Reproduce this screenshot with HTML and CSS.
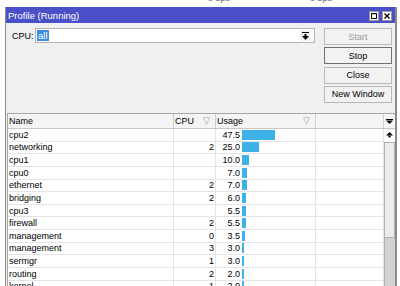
FILE: index.html
```html
<!DOCTYPE html>
<html>
<head>
<meta charset="utf-8">
<link rel="stylesheet" href="styles.css">
</head>
<body>
<div class="desk"><span class="desk-a">0 bps</span><span class="desk-b">0 bps</span></div>
<div class="window">
  <div class="titlebar">
    <span class="title">Profile (Running)</span>
    <span class="tb-btns">
      <svg class="tb-btn" width="10" height="10" viewBox="0 0 10 10"><rect x="0.5" y="0.5" width="9" height="9" fill="#fff" stroke="#9a9a9a"/><rect x="2.5" y="2.5" width="5" height="5" fill="none" stroke="#000"/><rect x="2" y="2" width="6" height="1.2" fill="#000"/></svg>
      <svg class="tb-btn" width="10" height="10" viewBox="0 0 10 10"><rect x="0.5" y="0.5" width="9" height="9" fill="#fff" stroke="#9a9a9a"/><path d="M2.5 2.5 L7.5 7.5 M7.5 2.5 L2.5 7.5" stroke="#000" stroke-width="1.3"/></svg>
    </span>
  </div>
  <div class="top">
    <div class="cpu-row">
      <span class="label">CPU:</span>
      <div class="combo">
        <span class="sel">all</span>
        <span class="drop"><svg width="7" height="8" viewBox="0 0 7 8"><rect x="0" y="0" width="7" height="1" fill="#000"/><rect x="2.5" y="2" width="2" height="2.5" fill="#000"/><polygon points="0,4 7,4 3.5,8" fill="#000"/></svg></span>
      </div>
    </div>
    <div class="buttons">
      <div class="btn disabled">Start</div>
      <div class="btn default">Stop</div>
      <div class="btn">Close</div>
      <div class="btn">New Window</div>
    </div>
  </div>
  <div class="table">
    <div class="grid">
      <div class="row head">
        <div class="cell">Name</div>
        <div class="cell hf">CPU <svg class="filt" width="7" height="8" viewBox="0 0 7 8"><polygon points="0.5,0.5 6.5,0.5 3.5,7.5" fill="none" stroke="#c4c4c4"/></svg></div>
        <div class="cell hf">Usage <svg class="filt" width="7" height="8" viewBox="0 0 7 8"><polygon points="0.5,0.5 6.5,0.5 3.5,7.5" fill="none" stroke="#c4c4c4"/></svg></div>
        <div class="cell"></div>
      </div>
      <div class="row"><div class="cell">cpu2</div><div class="cell num"></div><div class="cell use"><span class="val">47.5</span><span class="bar" style="width:33px"></span></div><div class="cell"></div></div>
      <div class="row"><div class="cell">networking</div><div class="cell num">2</div><div class="cell use"><span class="val">25.0</span><span class="bar" style="width:17px"></span></div><div class="cell"></div></div>
      <div class="row"><div class="cell">cpu1</div><div class="cell num"></div><div class="cell use"><span class="val">10.0</span><span class="bar" style="width:7px"></span></div><div class="cell"></div></div>
      <div class="row"><div class="cell">cpu0</div><div class="cell num"></div><div class="cell use"><span class="val">7.0</span><span class="bar" style="width:5px"></span></div><div class="cell"></div></div>
      <div class="row"><div class="cell">ethernet</div><div class="cell num">2</div><div class="cell use"><span class="val">7.0</span><span class="bar" style="width:5px"></span></div><div class="cell"></div></div>
      <div class="row"><div class="cell">bridging</div><div class="cell num">2</div><div class="cell use"><span class="val">6.0</span><span class="bar" style="width:4px"></span></div><div class="cell"></div></div>
      <div class="row"><div class="cell">cpu3</div><div class="cell num"></div><div class="cell use"><span class="val">5.5</span><span class="bar" style="width:4px"></span></div><div class="cell"></div></div>
      <div class="row"><div class="cell">firewall</div><div class="cell num">2</div><div class="cell use"><span class="val">5.5</span><span class="bar" style="width:4px"></span></div><div class="cell"></div></div>
      <div class="row"><div class="cell">management</div><div class="cell num">0</div><div class="cell use"><span class="val">3.5</span><span class="bar" style="width:2.5px"></span></div><div class="cell"></div></div>
      <div class="row"><div class="cell">management</div><div class="cell num">3</div><div class="cell use"><span class="val">3.0</span><span class="bar" style="width:2px"></span></div><div class="cell"></div></div>
      <div class="row"><div class="cell">sermgr</div><div class="cell num">1</div><div class="cell use"><span class="val">3.0</span><span class="bar" style="width:2px"></span></div><div class="cell"></div></div>
      <div class="row"><div class="cell">routing</div><div class="cell num">2</div><div class="cell use"><span class="val">2.0</span><span class="bar" style="width:1.5px"></span></div><div class="cell"></div></div>
      <div class="row"><div class="cell">kernel</div><div class="cell num">1</div><div class="cell use"><span class="val">2.0</span><span class="bar" style="width:1.5px"></span></div><div class="cell"></div></div>
    </div>
    <div class="vscroll">
      <div class="vs-head"><svg width="7" height="5" viewBox="0 0 7 5"><rect x="0" y="0" width="7" height="1" fill="#000"/><polygon points="0,1.5 7,1.5 3.5,5" fill="#000"/></svg></div>
      <div class="vs-up"><svg width="7" height="6" viewBox="0 0 7 6"><polygon points="3.5,0 7,3.5 0,3.5" fill="#000"/><rect x="2.5" y="3.5" width="2" height="2" fill="#000"/></svg></div>
      <div class="vs-thumb"></div>
      <div class="vs-track"></div>
    </div>
  </div>
</div>
</body>
</html>
```

FILE: styles.css
```css
html, body {
  margin: 0;
  padding: 0;
}
body {
  width: 400px;
  height: 286px;
  overflow: hidden;
  background: #fff;
  font-family: "Liberation Sans", Arial, sans-serif;
  font-size: 9px;
  color: #000;
}
.desk {
  height: 7px;
  overflow: hidden;
  display: flex;
  line-height: 10px;
  color: #666;
}
.desk-a, .desk-b {
  margin-top: -7px;
}
.desk-a {
  margin-left: 208px;
}
.desk-b {
  margin-left: 80px;
}
.window {
  margin-left: 5px;
  width: 392px;
  height: 279px;
  box-sizing: border-box;
  border-left: 1px solid #8c8c8c;
  border-right: 2px solid #8a8a8a;
  background: #f0f0f0;
  overflow: hidden;
}
.titlebar {
  height: 16px;
  background: #4b50c8;
  color: #fff;
  display: flex;
  align-items: center;
  padding: 0 3px 0 2px;
}
.title {
  flex: 1;
  font-size: 9.5px;
}
.tb-btns {
  display: flex;
  gap: 3px;
  align-items: center;
  padding-top: 2px;
}
.tb-btn {
  display: block;
}
.top {
  height: 90px;
  box-sizing: border-box;
  display: flex;
  padding: 5px 3px 0 6px;
}
.cpu-row {
  display: flex;
  align-items: center;
  height: 15px;
}
.label {
  width: 23px;
}
.combo {
  width: 280px;
  height: 15px;
  box-sizing: border-box;
  background: #fff;
  border: 1px solid #b4b4b4;
  display: flex;
  align-items: center;
  padding-left: 1px;
}
.sel {
  display: inline-block;
  background: #3d8ee0;
  color: #fff;
  font-size: 9.5px;
  padding: 0 1px;
  height: 11px;
  line-height: 11px;
}
.drop {
  margin-left: auto;
  margin-right: 3px;
  width: 11px;
  height: 11px;
  display: flex;
  align-items: center;
  justify-content: center;
  background: #f2f2f2;
}
.drop svg {
  display: block;
}
.buttons {
  margin-left: auto;
  width: 68px;
  display: flex;
  flex-direction: column;
  gap: 2.3px;
}
.btn {
  height: 17px;
  box-sizing: border-box;
  border: 1px solid #b8b8b8;
  background: #f2f2f2;
  display: flex;
  align-items: center;
  justify-content: center;
}
.btn.disabled {
  color: #9a9a9a;
}
.btn.default {
  border-color: #707070;
}
.table {
  margin-left: 1px;
  border-left: 1px solid #a8a8a8;
  border-top: 1px solid #a8a8a8;
  display: flex;
  background: #fff;
}
.grid {
  width: 376px;
}
.row {
  display: grid;
  grid-template-columns: 166px 42px 100px 68px;
  height: 12.63px;
  box-sizing: border-box;
  border-bottom: 1px solid #e4e4e4;
}
.row.head {
  height: 15px;
  background: #f4f4f4;
  border-bottom: 1px solid #c8c8c8;
}
.cell {
  border-right: 1px solid #e4e4e4;
  padding-left: 1px;
  display: flex;
  align-items: center;
  white-space: nowrap;
  overflow: hidden;
}
.head .cell {
  border-right-color: #cfcfcf;
}
.hf .filt {
  margin-left: auto;
  margin-right: 5px;
}
.num {
  justify-content: flex-end;
  padding-right: 1px;
}
.use {
  padding-left: 0;
}
.val {
  width: 24px;
  text-align: right;
  margin-right: 2px;
}
.bar {
  height: 10px;
  background: #3cb2e6;
  align-self: center;
}
.vscroll {
  width: 11px;
  display: flex;
  flex-direction: column;
  background: #f0f0f0;
}
.vs-head {
  height: 15px;
  box-sizing: border-box;
  border-bottom: 1px solid #c8c8c8;
  background: #f4f4f4;
  display: flex;
  align-items: center;
  justify-content: center;
}
.vs-up {
  height: 12.63px;
  box-sizing: border-box;
  display: flex;
  align-items: center;
  justify-content: center;
  background: #fff;
}
.vs-thumb {
  height: 96px;
  box-sizing: border-box;
  border: 1px solid #b0b0b0;
  background: #ececec;
}
.vs-track {
  flex: 1;
  height: 60px;
  background: #d2d2d2;
  border-left: 1px solid #b0b0b0;
}
```
